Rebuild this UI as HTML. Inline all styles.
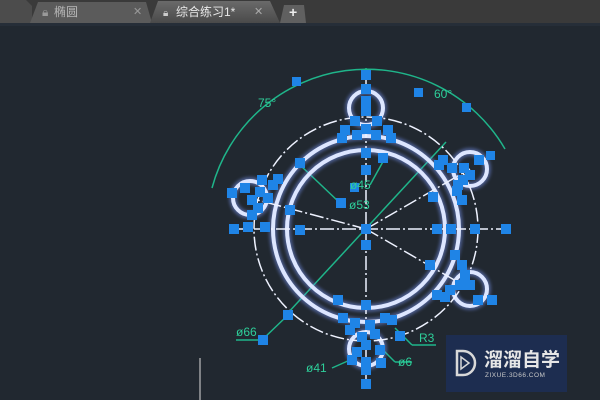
<!DOCTYPE html><html><head><meta charset="utf-8"><style>
body{margin:0;width:600px;height:400px;overflow:hidden;background:#212830;font-family:"Liberation Sans","Noto Sans CJK SC",sans-serif}
</style></head><body>
<svg width="600" height="400" style="position:absolute;left:0;top:0">
<defs><linearGradient id="tb" x1="0" y1="0" x2="0" y2="1"><stop offset="0" stop-color="#6a6a6a"/><stop offset="1" stop-color="#4a4a4a"/></linearGradient>
<filter id="gl" x="-20%" y="-20%" width="140%" height="140%"><feGaussianBlur stdDeviation="1.5"/></filter></defs>
<rect x="0" y="0" width="600" height="23" fill="#3a3a3a"/>
<path d="M0 0H26L32 6V23H0Z" fill="#4c4c4c"/>
<path d="M30 23L38 2H146L152 23Z" fill="#5b5b5b"/>
<path d="M150 23L158 1H270L280 23Z" fill="url(#tb)"/>
<path d="M280 23L284 5H304L306 23Z" fill="#606060"/>
<text x="42" y="16" fill="#9a9a9a" font-size="12">🔒︎</text>
<text x="54" y="16" fill="#b8b8b8" font-size="12">椭圆</text>
<text x="133" y="15" fill="#999" font-size="11">✕</text>
<text x="176" y="16" fill="#e8e8e8" font-size="12">综合练习1*</text>
<text x="163" y="16" fill="#ccc" font-size="10">🔒︎</text>
<text x="254" y="15" fill="#aaa" font-size="11">✕</text>
<text x="289" y="17" fill="#eee" font-size="14" font-weight="bold">+</text>
<rect x="0" y="23" width="600" height="3" fill="#262e38"/>
<g fill="none" stroke="#1fb58a" stroke-width="1.5">
<path d="M212 188A160 160 0 0 1 505 149"/>
<line x1="366" y1="68" x2="366" y2="80"/>
<line x1="286" y1="315" x2="446" y2="142"/>
<line x1="236" y1="340" x2="262" y2="340"/><line x1="262" y1="340" x2="288" y2="315"/>
<line x1="300" y1="165" x2="340" y2="203"/>
<line x1="385" y1="158" x2="370" y2="185"/>
<line x1="395" y1="362" x2="412" y2="362"/><line x1="395" y1="362" x2="381" y2="348"/>
<line x1="412" y1="345" x2="436" y2="345"/><line x1="412" y1="345" x2="395" y2="328"/>
<line x1="332" y1="368" x2="350" y2="360"/>
</g>
<g fill="none" stroke="#7f9cff" stroke-width="8" opacity="0.45" filter="url(#gl)">
<circle cx="366" cy="229" r="79"/><circle cx="366" cy="229" r="93"/>
<circle cx="366" cy="108" r="17"/><circle cx="250" cy="198" r="17"/><circle cx="470" cy="169" r="17"/><circle cx="470" cy="289" r="17"/><circle cx="366" cy="349" r="17"/>
</g>
<g fill="none" stroke="#dde6ff" stroke-width="4">
<circle cx="366" cy="229" r="79"/><circle cx="366" cy="229" r="93"/>
<circle cx="366" cy="108" r="17"/><circle cx="250" cy="198" r="17"/><circle cx="470" cy="169" r="17"/><circle cx="470" cy="289" r="17"/><circle cx="366" cy="349" r="17"/>
</g>
<g fill="none" stroke="#eef2ff" stroke-width="1.5" stroke-dasharray="14 3 2 3">
<circle cx="366" cy="229" r="112"/>
<line x1="232" y1="229" x2="508" y2="229"/><line x1="366" y1="80" x2="366" y2="380"/>
<line x1="366" y1="229" x2="250" y2="198"/><line x1="366" y1="229" x2="470" y2="169"/><line x1="366" y1="229" x2="470" y2="289"/>
</g>
<g fill="#1f84e6">
<rect x="292" y="77" width="9" height="9"/><rect x="414" y="88" width="9" height="9"/><rect x="462" y="103" width="9" height="9"/><rect x="486" y="151" width="9" height="9"/>
<rect x="361" y="70" width="10" height="10"/><rect x="361" y="84" width="10" height="10"/><rect x="361" y="96" width="10" height="10"/><rect x="361" y="106" width="10" height="10"/>
<rect x="350" y="116" width="10" height="10"/><rect x="372" y="116" width="10" height="10"/><rect x="340" y="125" width="10" height="10"/><rect x="383" y="125" width="10" height="10"/><rect x="361" y="124" width="10" height="10"/><rect x="337" y="133" width="10" height="10"/><rect x="386" y="133" width="10" height="10"/><rect x="361" y="148" width="10" height="10"/><rect x="361" y="165" width="10" height="10"/><rect x="352" y="130" width="10" height="10"/><rect x="371" y="130" width="10" height="10"/>
<rect x="438" y="155" width="10" height="10"/><rect x="474" y="155" width="10" height="10"/><rect x="459" y="163" width="10" height="10"/><rect x="465" y="170" width="10" height="10"/><rect x="453" y="180" width="10" height="10"/><rect x="457" y="195" width="10" height="10"/><rect x="434" y="160" width="10" height="10"/><rect x="447" y="163" width="10" height="10"/><rect x="458" y="175" width="10" height="10"/><rect x="452" y="186" width="10" height="10"/><rect x="428" y="192" width="10" height="10"/>
<rect x="227" y="188" width="10" height="10"/><rect x="240" y="183" width="10" height="10"/><rect x="257" y="175" width="10" height="10"/><rect x="273" y="174" width="10" height="10"/><rect x="268" y="180" width="10" height="10"/><rect x="247" y="195" width="10" height="10"/><rect x="253" y="203" width="10" height="10"/><rect x="255" y="187" width="10" height="10"/><rect x="263" y="193" width="10" height="10"/><rect x="247" y="210" width="10" height="10"/><rect x="260" y="222" width="10" height="10"/><rect x="229" y="224" width="10" height="10"/><rect x="285" y="205" width="10" height="10"/><rect x="295" y="158" width="10" height="10"/><rect x="243" y="222" width="10" height="10"/>
<rect x="336" y="198" width="10" height="10"/><rect x="378" y="153" width="10" height="10"/><rect x="350" y="183" width="9" height="9"/><rect x="361" y="224" width="10" height="10"/><rect x="361" y="240" width="10" height="10"/>
<rect x="295" y="225" width="10" height="10"/><rect x="432" y="224" width="10" height="10"/><rect x="446" y="224" width="10" height="10"/><rect x="470" y="224" width="10" height="10"/><rect x="501" y="224" width="10" height="10"/>
<rect x="361" y="300" width="10" height="10"/><rect x="338" y="313" width="10" height="10"/><rect x="350" y="318" width="10" height="10"/><rect x="365" y="320" width="10" height="10"/><rect x="380" y="313" width="10" height="10"/><rect x="345" y="325" width="10" height="10"/><rect x="357" y="332" width="10" height="10"/><rect x="370" y="329" width="10" height="10"/><rect x="361" y="340" width="10" height="10"/><rect x="352" y="347" width="10" height="10"/><rect x="361" y="357" width="10" height="10"/><rect x="361" y="365" width="10" height="10"/><rect x="361" y="379" width="10" height="10"/><rect x="347" y="355" width="10" height="10"/><rect x="375" y="345" width="10" height="10"/><rect x="333" y="295" width="10" height="10"/><rect x="387" y="315" width="10" height="10"/><rect x="395" y="331" width="10" height="10"/><rect x="376" y="358" width="10" height="10"/><rect x="258" y="335" width="10" height="10"/><rect x="283" y="310" width="10" height="10"/>
<rect x="450" y="250" width="10" height="10"/><rect x="457" y="260" width="10" height="10"/><rect x="460" y="270" width="10" height="10"/><rect x="455" y="280" width="10" height="10"/><rect x="445" y="285" width="10" height="10"/><rect x="432" y="290" width="10" height="10"/><rect x="440" y="292" width="10" height="10"/><rect x="465" y="280" width="10" height="10"/><rect x="473" y="295" width="10" height="10"/><rect x="487" y="295" width="10" height="10"/><rect x="425" y="260" width="10" height="10"/>
</g>
<g fill="#2ecf9a" font-size="12">
<text x="258" y="107">75°</text><text x="434" y="98">60°</text>
<text x="350" y="189">ø45</text><text x="349" y="209">ø53</text>
<text x="236" y="336">ø66</text><text x="306" y="372">ø41</text><text x="398" y="366">ø6</text><text x="419" y="342">R3</text>
</g>
<line x1="200" y1="358" x2="200" y2="400" stroke="#ddd" stroke-width="1"/>
<rect x="446" y="335" width="121" height="57" fill="#1e2d52" opacity="0.95"/>
<path d="M457 351H463A12 12 0 0 1 463 375H457Z" fill="none" stroke="#d8d8d8" stroke-width="2.5"/>
<path d="M461 357L469 363L461 369Z" fill="none" stroke="#d8d8d8" stroke-width="1.5"/>
<text x="484" y="366" fill="#e6e6e6" font-size="19" font-weight="bold">溜溜自学</text>
<text x="485" y="377" fill="#c8c8c8" font-size="6.5" letter-spacing="0.5">ZIXUE.3D66.COM</text>
</svg>
</body></html>
